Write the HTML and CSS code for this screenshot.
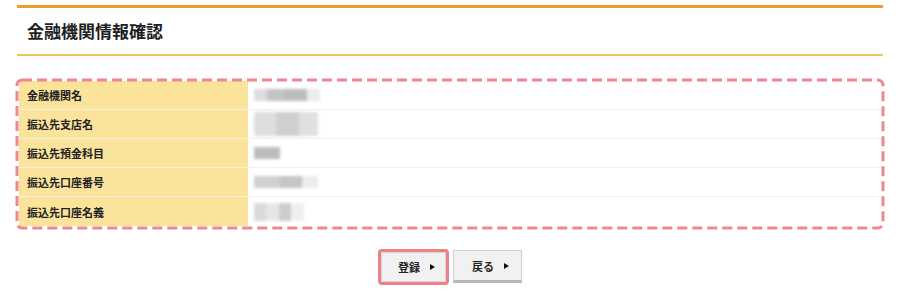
FILE: index.html
```html
<!DOCTYPE html>
<html lang="ja">
<head>
<meta charset="utf-8">
<link rel="stylesheet" href="styles.css">
</head>
<body>
<div class="page">
  <div class="title-bar"><h1 class="title">金融機関情報確認</h1></div>
  <div class="confirm-box">
    <svg class="dash-frame" width="100%" height="100%" aria-hidden="true">
      <rect x="0" y="0" width="100%" height="100%" rx="5" ry="5"></rect>
    </svg>
    <div class="row">
      <div class="label">金融機関名</div>
      <div class="value"><span class="blur b1"></span></div>
    </div>
    <div class="row">
      <div class="label">振込先支店名</div>
      <div class="value"><span class="blur b2"></span></div>
    </div>
    <div class="row">
      <div class="label">振込先預金科目</div>
      <div class="value"><span class="blur b3"></span></div>
    </div>
    <div class="row">
      <div class="label">振込先口座番号</div>
      <div class="value"><span class="blur b4"></span></div>
    </div>
    <div class="row last">
      <div class="label">振込先口座名義</div>
      <div class="value"><span class="blur b5"></span></div>
    </div>
  </div>
  <div class="actions">
    <div class="highlight"><button class="btn">登録<span class="arrow"></span></button></div>
    <button class="btn back">戻る<span class="arrow"></span></button>
  </div>
</div>
</body>
</html>
```
FILE: styles.css
```css
html, body {
  margin: 0;
  padding: 0;
  background: #ffffff;
  font-family: "Noto Sans CJK JP", "Noto Sans", sans-serif;
  color: #222;
}
.page {
  width: 866px;
  margin: 5px 0 0 17px;
}
.title-bar {
  border-top: 3px solid #e99f28;
  border-bottom: 2px solid #edc468;
  height: 46px;
  display: flex;
  align-items: center;
  padding-left: 10px;
}
.title {
  margin: -2px 0 0 0;
  font-size: 17px;
  font-weight: 700;
  letter-spacing: 0;
  color: #1e1e1e;
}
.confirm-box {
  position: relative;
  margin: 22px -1px 0 -2px;
  padding: 3px 3px 3px 4px;
}
.dash-frame {
  position: absolute;
  left: 1.5px;
  top: 1.5px;
  width: calc(100% - 3px);
  height: calc(100% - 3px);
  overflow: visible;
  pointer-events: none;
  z-index: 1;
}
.dash-frame rect {
  fill: none;
  stroke: #ef8791;
  stroke-width: 3;
  stroke-dasharray: 10 5;
}
.row {
  display: flex;
  height: 28px;
  border-bottom: 1px solid #f3f0ea;
}
.row.last {
  border-bottom: none;
  height: 29px;
}
.label {
  width: 221px;
  background: #fbe39c;
  padding-left: 8px;
  display: flex;
  align-items: center;
  font-size: 11px;
  font-weight: 700;
  border-right: 1px solid #fff;
}
.value {
  flex: 1;
  display: flex;
  align-items: center;
  padding-left: 5px;
}
.blur {
  display: block;
  filter: blur(1.5px);
}
.b1 {
  width: 66px; height: 12px;
  background: linear-gradient(90deg, #dcdcdc 0 20%, #c4c4c4 20% 45%, #bdbdbd 45% 80%, #ececec 80%);
}
.b2 {
  width: 64px; height: 24px;
  background: linear-gradient(90deg, #dedede 0 35%, #cfcfcf 35% 70%, #e0e0e0 70%);
}
.b3 {
  width: 26px; height: 12px;
  background: #bdbdbd;
}
.b4 {
  width: 64px; height: 12px;
  background: linear-gradient(90deg, #d0d0d0 0 40%, #c6c6c6 40% 75%, #ececec 75%);
}
.b5 {
  width: 50px; height: 18px;
  background: linear-gradient(90deg, #dadada 0 25%, #e6e6e6 25% 50%, #cdcdcd 50% 75%, #f0f0f0 75%);
}
.actions {
  display: flex;
  justify-content: center;
  align-items: flex-start;
  gap: 4px;
  margin-top: 20px;
}
.highlight {
  border: 3px solid #ee8088;
  border-radius: 4px;
  display: flex;
}
.btn {
  font-family: "Noto Sans CJK JP", "Noto Sans", sans-serif;
  font-size: 11px;
  font-weight: 700;
  color: #222;
  background: #f1f1f1;
  border: 1px solid #d6d6d6;
  width: 65px;
  height: 30px;
  display: flex;
  align-items: center;
  justify-content: center;
  gap: 10px;
  padding: 0 0 0 6px;
  margin: 0;
}
.btn.back {
  width: 69px;
  height: 33px;
  border: 1px solid #d0d0d0;
  border-bottom: 3px solid #b9b9b9;
  margin-top: 1px;
}
.arrow {
  width: 0;
  height: 0;
  border-top: 3px solid transparent;
  border-bottom: 3px solid transparent;
  border-left: 5px solid #111;
}
```
